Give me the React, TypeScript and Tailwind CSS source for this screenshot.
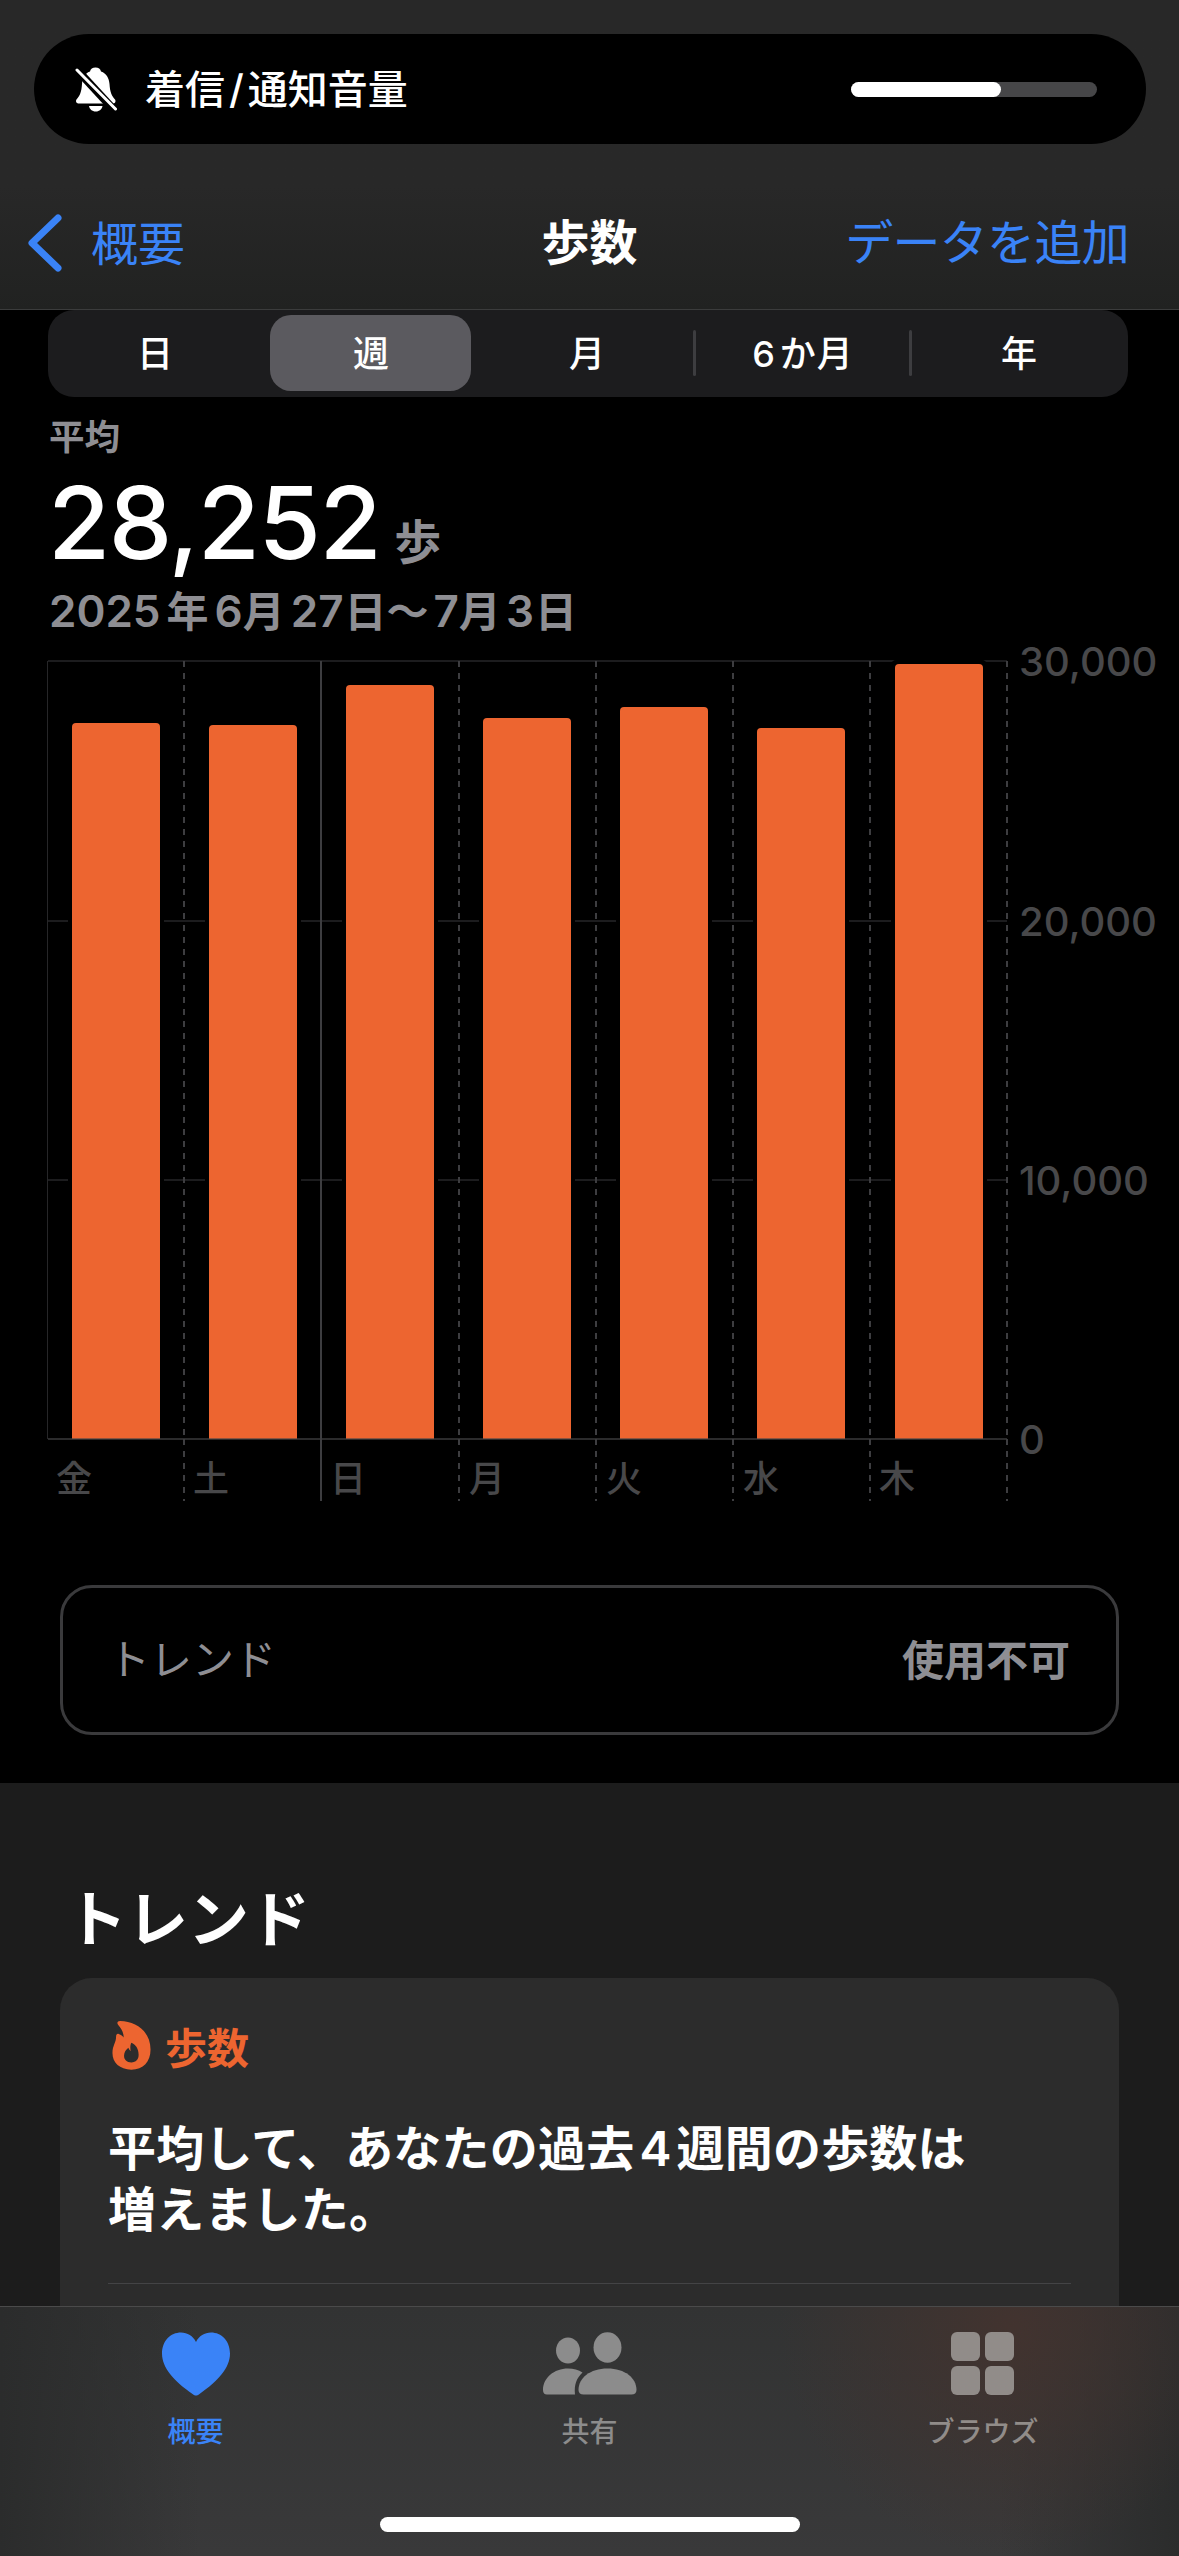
import { useState } from 'react'

const RANGES = ['日', '週', '月', '6か月', '年']

const DAYS = [
  { label: '金', x: 48, barX: 72, top: 723 },
  { label: '土', x: 185, barX: 209, top: 725 },
  { label: '日', x: 322, barX: 346, top: 685 },
  { label: '月', x: 461, barX: 483, top: 718 },
  { label: '火', x: 598, barX: 620, top: 707 },
  { label: '水', x: 735, barX: 757, top: 728 },
  { label: '木', x: 871, barX: 895, top: 664 }
]

const GRID_LINES = [
  { label: '30,000', y: 661 },
  { label: '20,000', y: 921 },
  { label: '10,000', y: 1180 },
  { label: '0', y: 1439 }
]

function BellOffIcon() {
  return (
    <svg width="42" height="46" viewBox="0 0 42 46">
      <path
        d="M20.500 1.500C23.500 1.500 25.500 3 26 5.500C31.500 7.500 34 12 34.500 18C35 26 36.500 29.500 40 33.500C41 35 40.500 37.500 38 37.500H4C1 37.500 0.500 35 1.500 33.500C5 29.500 6.500 26 7 18C7.500 12 9.500 7.500 15 5.500C15.500 3 17.500 1.500 20.500 1.500Z"
        fill="#fff"
      />
      <path d="M14 40H27.500C27 43 24.500 45.500 20.700 45.500C17 45.500 14.500 43 14 40Z" fill="#fff" />
      <path d="M-1 0.500L41 46" stroke="#000" strokeWidth="8" />
      <path d="M2 4L40.500 43" stroke="#fff" strokeWidth="3" strokeLinecap="round" />
    </svg>
  )
}

function FlameIcon() {
  return (
    <svg width="39" height="49" viewBox="35 34 117 148">
      <path
        fillRule="evenodd"
        d="M59 34C108 35 151 66 151 120C151 157 129 181 93 181C58 181 36 160 36 131C36 107 47 101 47 80C47 74 51 71 55 73C62 75 67 80 70 84C70 70 63 57 54 47C48 40 51 34 59 34ZM93 100C90 107 89 113 91 125C87 122 86 119 84 115C76 121 71 130 71 139C71 151 79 159 93 159C107 159 115 150 115 136C115 118 106 105 93 100Z"
        fill="#ed6530"
      />
    </svg>
  )
}

function HeartIcon() {
  return (
    <svg width="70" height="64" viewBox="0 0 70 64">
      <path
        d="M35 63.500C34 63.500 33 63 31.500 62C13 49 1 36 1 21.500C1 9 9.500 0.500 20 0.500C26.500 0.500 32 4 35 10C38 4 43.500 0.500 50 0.500C60.500 0.500 69 9 69 21.500C69 36 57 49 38.500 62C37 63 36 63.500 35 63.500Z"
        fill="#3a83f7"
      />
    </svg>
  )
}

function PeopleIcon() {
  return (
    <svg width="94" height="64" viewBox="0 0 94 64" fill="#8c8c8c">
      <ellipse cx="25" cy="18.500" rx="12" ry="13" />
      <ellipse cx="64.500" cy="15.500" rx="14" ry="15.200" />
      <path d="M4 62.500C1.500 62.500 0 61 0 58C0 46 11 36.500 25 36.500C30.500 36.500 35.500 38 39.500 40.500C33.500 46 31 53 32 62.500Z" />
      <path d="M40.500 62.500C37.500 62.500 35.500 61 35.500 58C35.500 46 47 36.500 64.500 36.500C82 36.500 93.500 46 93.500 58C93.500 61 91.500 62.500 88.500 62.500Z" />
    </svg>
  )
}

function BrowseIcon() {
  return (
    <svg width="63" height="64" viewBox="0 0 63 64" fill="#918c89">
      <rect x="0" y="0" width="29" height="29" rx="6" />
      <rect x="34" y="0" width="29" height="29" rx="6" />
      <rect x="0" y="34" width="29" height="29" rx="6" />
      <rect x="34" y="34" width="29" height="29" rx="6" />
    </svg>
  )
}

function StepsChart() {
  return (
    <svg width="1179" height="890" viewBox="0 620 1179 890" className="block shrink-0">
      {GRID_LINES.slice(0, 3).map((line) => (
        <path key={line.label} d={`M48 ${line.y}H1007`} stroke="#1c1c1e" strokeWidth="2" />
      ))}
      <path d="M47.500 661V1439" stroke="#262628" strokeWidth="1" />
      {DAYS.map((day) => (
        <g key={day.x}>
          {/* keeps the grid lines clear of the bar */}
          <rect x={day.barX - 4} y={day.top - 4} width="96" height={1443 - day.top} rx="5" fill="#000" />
          <path
            d={`M${day.barX} 1439V${day.top + 4}q0 -4 4 -4h80q4 0 4 4V1439Z`}
            fill="#ed6530"
          />
        </g>
      ))}
      <path d="M48 1439H1007" stroke="#48484a" strokeOpacity="0.6" strokeWidth="2" />
      {[184, 459, 596, 733, 870, 1007].map((x) => (
        <path key={x} d={`M${x} 661V1439M${x} 1439V1501`} stroke="#3d3d40" strokeWidth="2" strokeDasharray="6 6" />
      ))}
      <path d="M321 661V1501" stroke="#3d3d40" strokeWidth="2" />
      <g fill="#48484a" fontSize="36" fontWeight="500">
        {DAYS.map((day) => (
          <text key={day.label} x={day.x + 8} y="1492">
            {day.label}
          </text>
        ))}
      </g>
      <g fill="#48484a" fontSize="40" fontWeight="500">
        {GRID_LINES.map((line) => (
          <text key={line.label} x="1019" y={line.y + 15}>
            {line.label}
          </text>
        ))}
      </g>
    </svg>
  )
}

export default function App() {
  const [range, setRange] = useState('週')

  return (
    <div className="flex h-[2556px] w-[1179px] flex-col overflow-hidden bg-black font-['Inter','Noto_Sans_CJK_JP',sans-serif] text-white">
      {/* Header */}
      <header className="flex h-[310px] shrink-0 flex-col border-b border-[#3b3c3c] bg-linear-to-b from-[#282828] from-60% to-[#212221] pt-[34px]">
        <div className="mr-[33px] ml-[34px] flex h-[110px] items-center rounded-full bg-black pr-[49px] pl-[41px]">
          <BellOffIcon />
          <span className="ml-[28px] pt-[2px] text-[40px] leading-none font-medium">
            着信<span className="mx-[4px]">/</span>通知音量
          </span>
          <div className="ml-auto h-[15px] w-[246px] rounded-full bg-[#464648]">
            <div className="h-full w-[150px] rounded-full bg-white" />
          </div>
        </div>
        <div className="mt-[68px] grid h-[62px] grid-cols-3 items-center text-[48px] leading-none text-[#3a83f7]">
          <button className="flex items-center pl-[27px]">
            <svg width="36" height="60" viewBox="0 0 36 60" fill="none">
              <path d="M31 5L5 30L31 55" stroke="#3a83f7" strokeWidth="7" strokeLinecap="round" strokeLinejoin="round" />
            </svg>
            <span className="ml-[28px] text-[47px] whitespace-nowrap">概要</span>
          </button>
          <h1 className="text-center font-bold text-white">歩数</h1>
          <button className="pr-[50px] text-right tracking-[-0.7px] whitespace-nowrap">データを追加</button>
        </div>
      </header>

      {/* Range picker */}
      <div className="mr-[51px] ml-12 grid h-[87px] shrink-0 grid-cols-5 items-center rounded-[26px] bg-[#1c1c1e]">
        {RANGES.map((item, i) => (
          <button
            key={item}
            onClick={() => setRange(item)}
            className="relative flex h-[87px] items-center justify-center text-[36px] leading-none font-medium"
          >
            {range === item && <span className="absolute top-[5px] left-[6px] h-[76px] w-[201px] rounded-[21px] bg-[#5b5a5f]" />}
            {i > 2 && <span className="absolute top-[20px] -left-[3px] h-[46px] w-[3px] rounded-full bg-[#3d3d40]" />}
            <span className="relative -left-[1px]">
              {item.startsWith('6') ? (
                <>
                  <span className="mr-[5px]">6</span>
                  <span className="tracking-[1px]">{item.slice(1)}</span>
                </>
              ) : (
                item
              )}
            </span>
          </button>
        ))}
      </div>

      {/* Summary */}
      <section className="flex h-[223px] shrink-0 flex-col pl-[49px]">
        <div className="mt-[19px] h-[44px] text-[35.500px] leading-[44px] font-bold text-[#8e8e93]">平均</div>
        <div className="mt-[14px] flex h-[96px] items-baseline leading-[96px]">
          <span className="-ml-[1px] text-[101px] font-medium tracking-[-1.500px]">28,252</span>
          <span className="ml-[14px] text-[47px] font-bold text-[#8e8e93]">歩</span>
        </div>
        <div className="mt-[13px] h-[56px] text-[42px] leading-[56px] font-semibold whitespace-nowrap text-[#8e8e93]">
          <span className="text-[44px]">2025</span>
          <span className="mr-[6px] ml-[6px]">年</span>
          <span className="text-[44px]">6</span>月
          <span className="ml-[6px] text-[44px]">27</span>
          <span className="ml-[1px]">日〜</span>
          <span className="ml-[5px] text-[44px]">7</span>月
          <span className="ml-[5px] text-[44px]">3</span>
          <span className="ml-[1px]">日</span>
        </div>
      </section>

      <StepsChart />

      {/* Trend availability */}
      <div className="mx-[60px] mt-[75px] flex h-[150px] shrink-0 items-center justify-between rounded-[32px] border-[3px] border-[#3a3a3c] pr-[46px] pl-[45px] text-[42px] leading-none text-[#8e8e93]">
        <span>トレンド</span>
        <span className="pt-[2px] font-bold">使用不可</span>
      </div>

      {/* Trends */}
      <section className="mt-[48px] flex h-[523px] shrink-0 flex-col bg-[#1c1c1c] px-[60px]">
        <h2 className="mt-[98px] ml-[6px] h-[78px] text-[61px] leading-[78px] font-bold">トレンド</h2>
        <div className="mt-[19px] flex grow flex-col rounded-t-[32px] bg-[#2c2c2c] px-[48px] pt-[43px]">
          <div className="flex h-[49px] items-center pl-[4px]">
            <FlameIcon />
            <span className="ml-[14px] pt-[6px] text-[42px] leading-none font-bold text-[#ed6530]">歩数</span>
          </div>
          <p className="mt-[48px] text-[48px] leading-[61px] font-semibold tracking-[0.2px] whitespace-nowrap">
            平均して、あなたの過去<span className="mx-[5px]">4</span>週間の歩数は
            <br />
            増えました。
          </p>
          <div className="mt-[43px] h-px bg-[#444446]" />
        </div>
      </section>

      {/* Tab bar */}
      <nav className="flex h-[250px] shrink-0 flex-col items-center border-t border-[#4a4a4a] bg-[radial-gradient(circle_at_1010px_20px,#42332f_0,#42332f00_230px),linear-gradient(to_right,#2b2c2c_0,#39393900_200px,#39393900_1000px,#2b2c2c_1179px),linear-gradient(#323333,#39393a)]">
        <div className="grid w-full grid-cols-3 text-[28px] leading-none font-medium text-[#8c8c8c]">
          <button className="flex flex-col items-center pt-[25px] pr-[2px] text-[#3a83f7]">
            <HeartIcon />
            <span className="mt-[22px]">概要</span>
          </button>
          <button className="flex flex-col items-center pt-[25px]">
            <PeopleIcon />
            <span className="mt-[22px]">共有</span>
          </button>
          <button className="flex flex-col items-center pt-[25px] text-[#918c89]">
            <BrowseIcon />
            <span className="mt-[22px]">ブラウズ</span>
          </button>
        </div>
        <div className="mt-auto mb-[24px] h-[15px] w-[420px] rounded-full bg-white" />
      </nav>
    </div>
  )
}
